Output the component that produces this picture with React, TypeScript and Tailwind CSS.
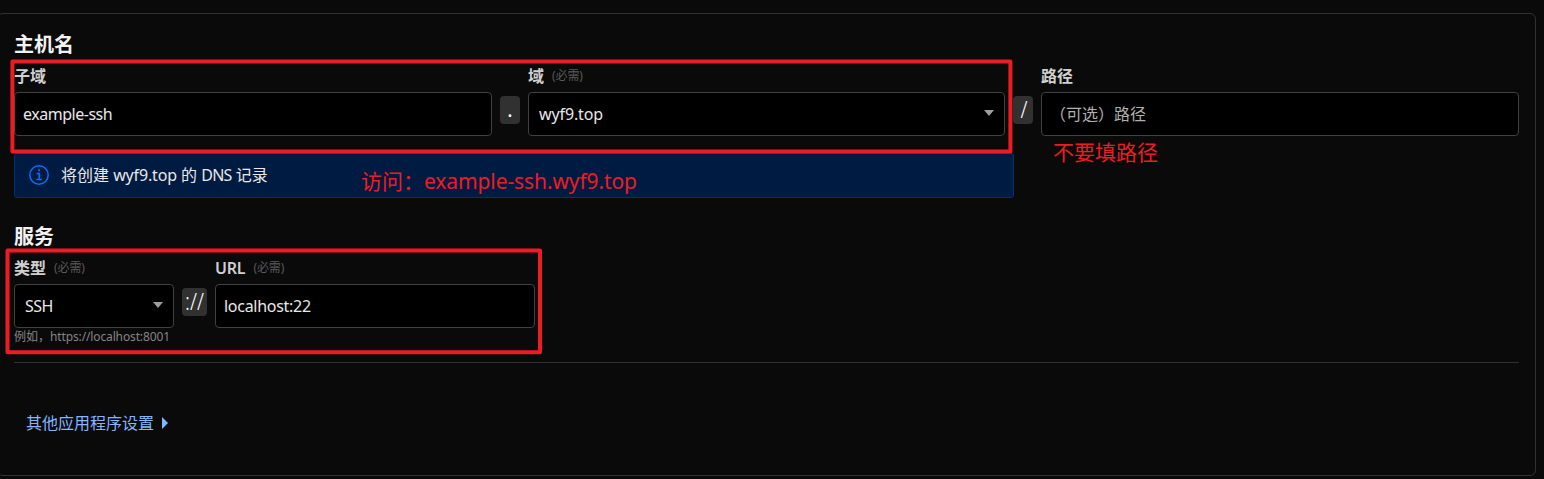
import type { ReactNode } from "react";

function Label({ children, required }: { children: ReactNode; required?: boolean }) {
  return (
    <div className="flex h-8 items-center gap-2 whitespace-nowrap text-[16px] font-semibold text-[#d0d0d0]">
      <span>{children}</span>
      {required && <span className="text-[12px] font-normal tracking-[-0.1px] text-[#595959]">(必需)</span>}
    </div>
  );
}

function Caret() {
  return (
    <svg width="10" height="6" viewBox="0 0 10 6" className="mb-[3px] fill-[#9d9d9d]">
      <path d="M0 0h10L5 6z" />
    </svg>
  );
}

function Box({ children, select }: { children: ReactNode; select?: boolean }) {
  return (
    <div
      className={
        "flex h-11 items-center justify-between rounded border border-[#404040] bg-black text-[16px] text-[#e8e8e8] " +
        (select ? "px-[10px]" : "px-2")
      }
    >
      {children}
      {select && <Caret />}
    </div>
  );
}

function Separator({ children }: { children: ReactNode }) {
  return (
    <div className="mt-9 flex h-7 items-center justify-center rounded bg-[#313131] text-[20px] text-white">
      {children}
    </div>
  );
}

export default function App() {
  return (
    <div className="relative h-[479px] w-[1544px] overflow-hidden bg-[#0a0a0a] pt-[13px] font-['Noto_Sans','Noto_Sans_CJK_SC',sans-serif] text-[#e8e8e8]">
      <main className="-ml-[3px] h-[463px] w-[1539px] rounded-md border border-[#313131] px-4 pt-4">
        <h2 className="h-[30px] text-[20px] leading-[30px] font-semibold text-[#f2f2f2]">主机名</h2>
        <div className="grid h-[93px] grid-cols-[478px_20px_477px_20px_478px] gap-2">
          <div>
            <Label>子域</Label>
            <Box><span className="tracking-[-0.48px]">example-ssh</span></Box>
          </div>
          <Separator><span className="font-normal">.</span></Separator>
          <div>
            <Label required>域</Label>
            <Box select><span className="tracking-[-0.12px]">wyf9.top</span></Box>
          </div>
          <Separator><span className="inline-block translate-x-px scale-y-115 font-light">/</span></Separator>
          <div>
            <Label>路径</Label>
            <Box><span className="text-[#b0b0b0]">（可选）路径</span></Box>
          </div>
        </div>
        <div className="flex h-[45px] w-[1000px] items-center rounded-[3px] border border-[#003071] bg-[#001b41] pb-[2px] pl-[14px] text-[16px]">
          <svg width="20" height="20" viewBox="0 0 20 20" fill="none" stroke="#0a6cff" strokeWidth="1.5">
            <circle cx="10" cy="10" r="9.2" />
            <path d="M7.6 8.4h2.6v6M7.3 14.5h5.6" />
            <path d="M9.1 5.2h1.8" strokeWidth="2" />
          </svg>
          <span className="ml-3">
            将创建 <span className="tracking-[-0.15px]">wyf9.top</span> 的{" "}
            <span className="tracking-[-0.8px]">DNS</span> 记录
          </span>
        </div>
        <h2 className="mt-6 h-[30px] text-[20px] leading-[30px] font-semibold text-[#f2f2f2]">服务</h2>
        <div className="grid h-[110px] grid-cols-[160px_25px_320px] gap-2">
          <div>
            <Label required>类型</Label>
            <Box select><span className="tracking-[-0.5px]">SSH</span></Box>
            <p className="text-[12px] leading-[18px] text-[#858585]">
              例如，<span className="tracking-[-0.13px]">https://localhost:8001</span>
            </p>
          </div>
          <Separator><span className="inline-block scale-y-115 font-light">://</span></Separator>
          <div>
            <Label required><span className="tracking-[-0.2px]">URL</span></Label>
            <Box><span className="tracking-[-0.28px]">localhost:22</span></Box>
          </div>
        </div>
        <div className="border-t border-[#313131] pt-12 pl-3">
          <button className="flex items-center gap-2 text-[16px] leading-6 text-[#82b6ff]">
            <span>其他应用程序设置</span>
            <svg width="6" height="12" viewBox="0 0 6 12" fill="currentColor"><path d="M0 0l6 6-6 6z" /></svg>
          </button>
        </div>
      </main>
      <svg className="pointer-events-none absolute inset-0" width="1544" height="479" fill="none" stroke="#ed1c24" strokeWidth="4" strokeLinejoin="round">
        <rect x="12.4" y="61.4" width="998" height="90" />
        <rect x="7.5" y="250.4" width="532.5" height="101.8" />
      </svg>
      <div className="absolute top-[166px] left-[361px] text-[21px] leading-[30px] whitespace-nowrap text-[#ed1c24]">
        访问：<span className="tracking-[-0.1px]">example-ssh.wyf9.top</span>
      </div>
      <div className="absolute top-[137px] left-[1053px] text-[21px] leading-[30px] whitespace-nowrap text-[#ed1c24]">不要填路径</div>
    </div>
  );
}
